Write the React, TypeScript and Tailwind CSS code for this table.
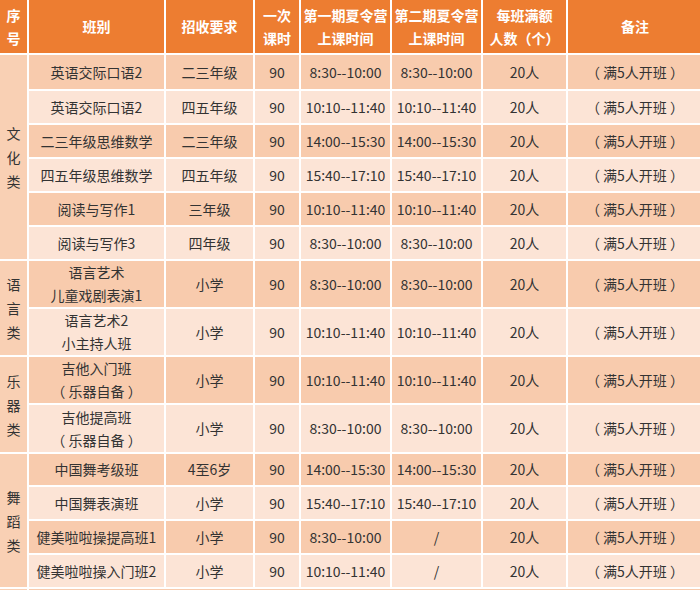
import React from 'react';

type Row = {
  name: string[];
  req: string;
  first: string;
  second: string;
  h: string;
};

type Group = {
  label: string[];
  rows: Row[];
};

const groups: Group[] = [
  {
    label: ['文', '化', '类'],
    rows: [
      { name: ['英语交际口语2'], req: '二三年级', first: '8:30--10:00', second: '8:30--10:00', h: 'h-[36px]' },
      { name: ['英语交际口语2'], req: '四五年级', first: '10:10--11:40', second: '10:10--11:40', h: 'h-[34px]' },
      { name: ['二三年级思维数学'], req: '二三年级', first: '14:00--15:30', second: '14:00--15:30', h: 'h-[34px]' },
      { name: ['四五年级思维数学'], req: '四五年级', first: '15:40--17:10', second: '15:40--17:10', h: 'h-[34px]' },
      { name: ['阅读与写作1'], req: '三年级', first: '10:10--11:40', second: '10:10--11:40', h: 'h-[34px]' },
      { name: ['阅读与写作3'], req: '四年级', first: '8:30--10:00', second: '8:30--10:00', h: 'h-[34px]' },
    ],
  },
  {
    label: ['语', '言', '类'],
    rows: [
      { name: ['语言艺术', '儿童戏剧表演1'], req: '小学', first: '8:30--10:00', second: '8:30--10:00', h: 'h-[48px]' },
      { name: ['语言艺术2', '小主持人班'], req: '小学', first: '10:10--11:40', second: '10:10--11:40', h: 'h-[48px]' },
    ],
  },
  {
    label: ['乐', '器', '类'],
    rows: [
      { name: ['吉他入门班', '（ 乐器自备 ）'], req: '小学', first: '10:10--11:40', second: '10:10--11:40', h: 'h-[48px]' },
      { name: ['吉他提高班', '（ 乐器自备 ）'], req: '小学', first: '8:30--10:00', second: '8:30--10:00', h: 'h-[49px]' },
    ],
  },
  {
    label: ['舞', '蹈', '类'],
    rows: [
      { name: ['中国舞考级班'], req: '4至6岁', first: '14:00--15:30', second: '14:00--15:30', h: 'h-[33px]' },
      { name: ['中国舞表演班'], req: '小学', first: '15:40--17:10', second: '15:40--17:10', h: 'h-[34px]' },
      { name: ['健美啦啦操提高班1'], req: '小学', first: '8:30--10:00', second: '/', h: 'h-[34px]' },
      { name: ['健美啦啦操入门班2'], req: '小学', first: '10:10--11:40', second: '/', h: 'h-[34px]' },
    ],
  },
];

const cell = 'border-2 border-white text-center align-middle p-0 leading-[23px] whitespace-pre';

export default function App() {
  let band = 0;

  return (
    <div
      className="w-[700px] h-[590px] overflow-hidden bg-white text-[14px] text-[#333333]"
      style={{ fontFamily: '"Noto Sans CJK SC", "Noto Sans", sans-serif' }}
    >
      <table className="w-[704px] -ml-[2px] -mt-[2px] table-fixed border-collapse">
        <colgroup>
          <col className="w-[29px]" />
          <col className="w-[137px]" />
          <col className="w-[89px]" />
          <col className="w-[46px]" />
          <col className="w-[91px]" />
          <col className="w-[91px]" />
          <col className="w-[85px]" />
          <col className="w-[136px]" />
        </colgroup>
        <thead>
          <tr className="h-[55px] bg-[#ed7d31] text-white font-bold leading-[24px]">
            <th className={cell}>序<br />号</th>
            <th className={cell}>班别</th>
            <th className={cell}>招收要求</th>
            <th className={cell}>一次<br />课时</th>
            <th className={cell}>第一期夏令营<br />上课时间</th>
            <th className={cell}>第二期夏令营<br />上课时间</th>
            <th className={cell}>每班满额<br />人数（个）</th>
            <th className={cell}>备注</th>
          </tr>
        </thead>
        <tbody>
          {groups.map((g) =>
            g.rows.map((r, i) => {
              const dark = band++ % 2 === 0;
              const bg = dark ? 'bg-[#f8cbad]' : 'bg-[#fce4d6]';
              return (
                <tr key={g.label.join('') + i} className={r.h}>
                  {i === 0 && (
                    <td rowSpan={g.rows.length} className={`${cell} bg-[#f9d0b4] leading-[24px]`}>
                      {g.label.map((c) => (
                        <div key={c}>{c}</div>
                      ))}
                    </td>
                  )}
                  <td className={`${cell} ${bg}`}>
                    {r.name.map((n) => (
                      <div key={n}>{n}</div>
                    ))}
                  </td>
                  <td className={`${cell} ${bg}`}>{r.req}</td>
                  <td className={`${cell} ${bg}`}>90</td>
                  <td className={`${cell} ${bg}`}>{r.first}</td>
                  <td className={`${cell} ${bg}`}>{r.second}</td>
                  <td className={`${cell} ${bg}`}>20人</td>
                  <td className={`${cell} ${bg}`}>{'（ 满5人开班 ）'}</td>
                </tr>
              );
            })
          )}
          <tr className="h-[34px]">
            <td className={`${cell} bg-[#f9d0b4]`}></td>
            <td className={`${cell} bg-[#f8cbad]`} colSpan={7}></td>
          </tr>
        </tbody>
      </table>
    </div>
  );
}
